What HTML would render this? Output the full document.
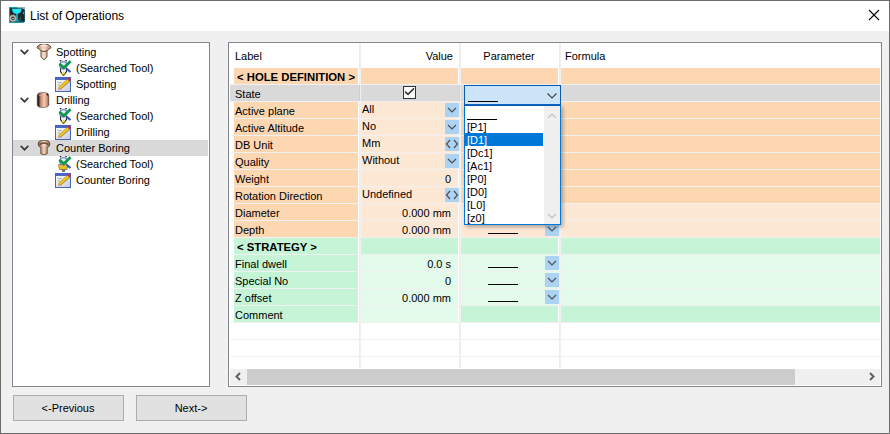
<!DOCTYPE html>
<html><head><meta charset="utf-8"><style>
html,body{margin:0;padding:0;width:890px;height:434px;overflow:hidden;background:#f0f0f0}
#r{position:relative;width:890px;height:434px;overflow:hidden;font-family:"Liberation Sans", sans-serif;font-size:12px}
#r div{position:absolute}
</style></head><body><div id="r">
<div style="left:0px;top:0px;width:890px;height:434px;background:#6b6b6b;"></div>
<div style="left:1px;top:1px;width:888px;height:432px;background:#f0f0f0;"></div>
<div style="left:1px;top:1px;width:888px;height:30px;background:#ffffff;"></div>
<svg style="position:absolute;left:9px;top:7px" width="16" height="16" viewBox="0 0 16 16">
<rect x="0" y="0" width="16" height="16" fill="#1a9ea4"/>
<rect x="1" y="1.2" width="14.6" height="13.4" fill="#20262c"/>
<path d="M8.5 0 H16 V3 Q14 1.5 12 1.2 H8.5 Z" fill="#9ab0b0"/>
<path d="M15.2 4 V8 L13.5 6 Z" fill="#40a0a0"/>
<path d="M3 1.8 H12.5 Q12.5 6.6 7.9 6.9 Q3 6.6 3 1.8 Z" fill="#1ae8f2"/>
<rect x="7.3" y="6.5" width="1.4" height="7" fill="#18d0d8"/>
<rect x="5.8" y="13.2" width="4.4" height="1" fill="#18c0c8"/>
<circle cx="3.9" cy="11.2" r="2.5" fill="#252a30" stroke="#b4b4b4" stroke-width="1.5"/>
<circle cx="3.9" cy="11.2" r="3.5" fill="none" stroke="#a0a0a0" stroke-width="0.9" stroke-dasharray="1 0.8"/>
<path d="M2.9 11.4 H5" stroke="#d8d8d8" stroke-width="0.9"/>
<path d="M11.8 9.8 Q10.4 10.6 11.2 11.8 Q12 12.8 10.6 13.4" fill="none" stroke="#1e9aa0" stroke-width="0.8"/>
<rect x="15" y="15" width="1" height="1" fill="#e0f0f0"/>
</svg>
<div style="left:30px;top:10px;font-size:12px;line-height:13px;font-weight:normal;color:#000;white-space:pre;">List of Operations</div>
<svg style="position:absolute;left:868px;top:9px" width="12" height="12" viewBox="0 0 12 12"><path d="M1 1 L11 11 M11 1 L1 11" stroke="#000" stroke-width="1.1"/></svg>
<div style="left:12px;top:42px;width:198px;height:345px;background:#828790;"></div>
<div style="left:13px;top:43px;width:196px;height:343px;background:#ffffff;"></div>
<div style="left:13px;top:140px;width:195px;height:16px;background:#d9d9d9;"></div>
<svg style="position:absolute;left:20px;top:49px" width="10" height="7" viewBox="0 0 10 7"><path d="M0.7 0.9 L4.5 4.7 L8.3 0.9" fill="none" stroke="#3c3c3c" stroke-width="1.7"/></svg>
<svg style="position:absolute;left:36px;top:44px" width="16" height="16" viewBox="0 0 16 16">
<defs><linearGradient id="cg1" x1="0" x2="1"><stop offset="0" stop-color="#a07860"/><stop offset="0.45" stop-color="#fbdccb"/><stop offset="1" stop-color="#b08a70"/></linearGradient></defs>
<path d="M4 0.6 Q8 -0.2 12 0.6 Q14.9 2 14.9 3.3 Q14.6 4.6 12.6 5.4 Q11.2 6 11 7 L11 13 L8 15.8 L5 13 L5 7 Q4.8 6 3.4 5.4 Q1.4 4.6 1.1 3.3 Q1.1 2 4 0.6 Z" fill="url(#cg1)" stroke="#4e4628" stroke-width="0.9"/>
<path d="M5 6.9 Q8 8 11 6.9" fill="none" stroke="#6a4a34" stroke-width="1"/>
<ellipse cx="8" cy="1.6" rx="3.6" ry="1" fill="#fde6d8"/>
<ellipse cx="8" cy="5.6" rx="1.6" ry="0.6" fill="#fde6d8"/>
</svg>
<div style="left:56px;top:46px;font-size:11px;line-height:13px;font-weight:normal;color:#000;white-space:pre;">Spotting</div>
<svg style="position:absolute;left:56px;top:60px" width="16" height="16" viewBox="0 0 16 16">
<path d="M4.5 0 L4.5 11.5 L7.5 15.6 L10.5 11.5 L10.5 0 Z" fill="#eceef6"/>
<path d="M4.5 7.5 L4.5 11.5 L7.5 15.6 L10.5 11.5 L10.5 7.5" fill="none" stroke="#282828" stroke-width="1.1"/>
<path d="M4.5 0 V1.2 M10 0 V1.2" stroke="#181818" stroke-width="1.4"/>
<path d="M4.5 1.2 V7.5 M10.5 1.2 V7.5" stroke="#a8b0d8" stroke-width="1"/>
<path d="M7.5 16 L6 13.6 L9 13.6 Z" fill="#905800"/><ellipse cx="7.2" cy="13.4" rx="1.6" ry="1" fill="#f4e020"/>
<circle cx="7.3" cy="5.2" r="3.6" fill="none" stroke="#7c88d4" stroke-width="1.3"/>
<path d="M10.8 8.8 L14.4 12" stroke="#3a5ac0" stroke-width="2.3"/>
<path d="M3.4 3.7 L7.7 7.8 L14.6 1.2" fill="none" stroke="#0c9a46" stroke-width="2.7"/>
</svg>
<div style="left:76px;top:62px;font-size:11px;line-height:13px;font-weight:normal;color:#000;white-space:pre;">(Searched Tool)</div>
<svg style="position:absolute;left:55px;top:76px" width="16" height="16" viewBox="0 0 16 16">
<defs><linearGradient id="pg" x1="0" y1="0" x2="1" y2="1"><stop offset="0" stop-color="#ffffff"/><stop offset="1" stop-color="#c8ccd8"/></linearGradient></defs>
<rect x="0.5" y="1.5" width="15" height="14" fill="url(#pg)" stroke="#4560c0"/>
<rect x="1" y="2" width="14" height="2" fill="#4c68c4"/>
<path d="M2.5 6.5 H7 M2.5 9 H5" stroke="#a0a4b0" stroke-width="0.8"/>
<path d="M3.2 13.6 L4.2 10.8 L12.6 3.2 L14.6 5.2 L6.2 12.8 Z" fill="#f4c818" stroke="#a87810" stroke-width="0.6"/>
<path d="M3.2 13.6 L4.2 10.8 L6.2 12.8 Z" fill="#f0a888"/>
<path d="M12.4 3.4 L14.4 5.4 L15.6 3.6 L13.8 1.6 Z" fill="#e02a1a"/>
<path d="M5 13.5 L14.8 5.5" stroke="#606878" stroke-width="0.7" opacity="0.6"/>
</svg>
<div style="left:76px;top:78px;font-size:11px;line-height:13px;font-weight:normal;color:#000;white-space:pre;">Spotting</div>
<svg style="position:absolute;left:20px;top:97px" width="10" height="7" viewBox="0 0 10 7"><path d="M0.7 0.9 L4.5 4.7 L8.3 0.9" fill="none" stroke="#3c3c3c" stroke-width="1.7"/></svg>
<svg style="position:absolute;left:36px;top:92px" width="16" height="16" viewBox="0 0 16 16">
<defs><linearGradient id="cg2" x1="0" x2="1"><stop offset="0" stop-color="#1c1410"/><stop offset="0.14" stop-color="#3a2820"/><stop offset="0.3" stop-color="#c08c70"/><stop offset="0.6" stop-color="#f6cbb2"/><stop offset="0.85" stop-color="#d09a7c"/><stop offset="1" stop-color="#684636"/></linearGradient></defs>
<path d="M1.2 3 Q1.5 0.6 7 0.4 Q12.5 0.6 12.8 3 L12.8 13 Q12.5 15.5 7 15.6 Q1.5 15.5 1.2 13 Z" fill="url(#cg2)" stroke="#4a3a28" stroke-width="0.5"/>
<path d="M2.2 2.8 Q7 5.2 11.8 2.8" fill="none" stroke="#e0b098" stroke-width="0.8"/>
<ellipse cx="11.4" cy="2.6" rx="0.9" ry="1" fill="#181008"/>
</svg>
<div style="left:56px;top:94px;font-size:11px;line-height:13px;font-weight:normal;color:#000;white-space:pre;">Drilling</div>
<svg style="position:absolute;left:56px;top:108px" width="16" height="16" viewBox="0 0 16 16">
<path d="M4.5 0 L4.5 11.5 L7.5 15.6 L10.5 11.5 L10.5 0 Z" fill="#eceef6"/>
<path d="M4.5 7.5 L4.5 11.5 L7.5 15.6 L10.5 11.5 L10.5 7.5" fill="none" stroke="#282828" stroke-width="1.1"/>
<path d="M4.5 0 V1.2 M10 0 V1.2" stroke="#181818" stroke-width="1.4"/>
<path d="M4.5 1.2 V7.5 M10.5 1.2 V7.5" stroke="#a8b0d8" stroke-width="1"/>
<path d="M7.5 16 L6 13.6 L9 13.6 Z" fill="#905800"/><ellipse cx="7.2" cy="13.4" rx="1.6" ry="1" fill="#f4e020"/>
<circle cx="7.3" cy="5.2" r="3.6" fill="none" stroke="#7c88d4" stroke-width="1.3"/>
<path d="M10.8 8.8 L14.4 12" stroke="#3a5ac0" stroke-width="2.3"/>
<path d="M3.4 3.7 L7.7 7.8 L14.6 1.2" fill="none" stroke="#0c9a46" stroke-width="2.7"/>
</svg>
<div style="left:76px;top:110px;font-size:11px;line-height:13px;font-weight:normal;color:#000;white-space:pre;">(Searched Tool)</div>
<svg style="position:absolute;left:55px;top:124px" width="16" height="16" viewBox="0 0 16 16">
<defs><linearGradient id="pg" x1="0" y1="0" x2="1" y2="1"><stop offset="0" stop-color="#ffffff"/><stop offset="1" stop-color="#c8ccd8"/></linearGradient></defs>
<rect x="0.5" y="1.5" width="15" height="14" fill="url(#pg)" stroke="#4560c0"/>
<rect x="1" y="2" width="14" height="2" fill="#4c68c4"/>
<path d="M2.5 6.5 H7 M2.5 9 H5" stroke="#a0a4b0" stroke-width="0.8"/>
<path d="M3.2 13.6 L4.2 10.8 L12.6 3.2 L14.6 5.2 L6.2 12.8 Z" fill="#f4c818" stroke="#a87810" stroke-width="0.6"/>
<path d="M3.2 13.6 L4.2 10.8 L6.2 12.8 Z" fill="#f0a888"/>
<path d="M12.4 3.4 L14.4 5.4 L15.6 3.6 L13.8 1.6 Z" fill="#e02a1a"/>
<path d="M5 13.5 L14.8 5.5" stroke="#606878" stroke-width="0.7" opacity="0.6"/>
</svg>
<div style="left:76px;top:126px;font-size:11px;line-height:13px;font-weight:normal;color:#000;white-space:pre;">Drilling</div>
<svg style="position:absolute;left:20px;top:145px" width="10" height="7" viewBox="0 0 10 7"><path d="M0.7 0.9 L4.5 4.7 L8.3 0.9" fill="none" stroke="#3c3c3c" stroke-width="1.7"/></svg>
<svg style="position:absolute;left:36px;top:140px" width="16" height="16" viewBox="0 0 16 16">
<defs><linearGradient id="cg3" x1="0" x2="1"><stop offset="0" stop-color="#80604a"/><stop offset="0.5" stop-color="#f8d2bc"/><stop offset="1" stop-color="#806048"/></linearGradient></defs>
<path d="M2.3 3.2 Q2.5 0.2 8 0.2 Q13.5 0.2 13.7 3.2 L13.7 5 Q13.5 6.8 11.2 7.4 L11.2 13.8 Q8 15.6 4.8 13.8 L4.8 7.4 Q2.5 6.8 2.3 5 Z" fill="url(#cg3)" stroke="#4e4430" stroke-width="0.8"/>
<path d="M3.6 4.6 Q8 1.4 12.4 4.6" fill="none" stroke="#6a4836" stroke-width="1.5"/>
<ellipse cx="8" cy="4.9" rx="1.8" ry="0.7" fill="#fde8da"/>
</svg>
<div style="left:56px;top:142px;font-size:11px;line-height:13px;font-weight:normal;color:#000;white-space:pre;">Counter Boring</div>
<svg style="position:absolute;left:56px;top:156px" width="16" height="16" viewBox="0 0 16 16">
<path d="M4.5 0 L4.5 11.5 L7.5 15.6 L10.5 11.5 L10.5 0 Z" fill="#eceef6"/>
<path d="M4.5 7.5 L4.5 11.5 L7.5 15.6 L10.5 11.5 L10.5 7.5" fill="none" stroke="#282828" stroke-width="1.1"/>
<path d="M4.5 0 V1.2 M10 0 V1.2" stroke="#181818" stroke-width="1.4"/>
<path d="M4.5 1.2 V7.5 M10.5 1.2 V7.5" stroke="#a8b0d8" stroke-width="1"/>
<path d="M2.6 8.5 L11.6 8.5 L11 13.5 L3.4 13.5 Z" fill="#e8c020" stroke="#806010" stroke-width="0.6"/><rect x="6" y="13.5" width="3" height="2.5" fill="#707070"/>
<circle cx="7.3" cy="5.2" r="3.6" fill="none" stroke="#7c88d4" stroke-width="1.3"/>
<path d="M10.8 8.8 L14.4 12" stroke="#3a5ac0" stroke-width="2.3"/>
<path d="M3.4 3.7 L7.7 7.8 L14.6 1.2" fill="none" stroke="#0c9a46" stroke-width="2.7"/>
</svg>
<div style="left:76px;top:158px;font-size:11px;line-height:13px;font-weight:normal;color:#000;white-space:pre;">(Searched Tool)</div>
<svg style="position:absolute;left:55px;top:172px" width="16" height="16" viewBox="0 0 16 16">
<defs><linearGradient id="pg" x1="0" y1="0" x2="1" y2="1"><stop offset="0" stop-color="#ffffff"/><stop offset="1" stop-color="#c8ccd8"/></linearGradient></defs>
<rect x="0.5" y="1.5" width="15" height="14" fill="url(#pg)" stroke="#4560c0"/>
<rect x="1" y="2" width="14" height="2" fill="#4c68c4"/>
<path d="M2.5 6.5 H7 M2.5 9 H5" stroke="#a0a4b0" stroke-width="0.8"/>
<path d="M3.2 13.6 L4.2 10.8 L12.6 3.2 L14.6 5.2 L6.2 12.8 Z" fill="#f4c818" stroke="#a87810" stroke-width="0.6"/>
<path d="M3.2 13.6 L4.2 10.8 L6.2 12.8 Z" fill="#f0a888"/>
<path d="M12.4 3.4 L14.4 5.4 L15.6 3.6 L13.8 1.6 Z" fill="#e02a1a"/>
<path d="M5 13.5 L14.8 5.5" stroke="#606878" stroke-width="0.7" opacity="0.6"/>
</svg>
<div style="left:76px;top:174px;font-size:11px;line-height:13px;font-weight:normal;color:#000;white-space:pre;">Counter Boring</div>
<div style="left:228px;top:42px;width:654px;height:345px;background:#828790;"></div>
<div style="left:229px;top:43px;width:652px;height:343px;background:#ffffff;"></div>
<div style="left:235px;top:50px;font-size:11px;line-height:13px;font-weight:normal;color:#000;white-space:pre;">Label</div>
<div style="left:153px;width:300px;text-align:right;top:50px;font-size:11px;line-height:13px;font-weight:normal;color:#000;white-space:pre;">Value</div>
<div style="left:359px;width:300px;text-align:center;top:50px;font-size:11px;line-height:13px;font-weight:normal;color:#000;white-space:pre;">Parameter</div>
<div style="left:565px;top:50px;font-size:11px;line-height:13px;font-weight:normal;color:#000;white-space:pre;">Formula</div>
<div style="left:359px;top:43px;width:1px;height:325px;background:#e6eef8;"></div>
<div style="left:360px;top:43px;width:1px;height:325px;background:#f0f0f0;"></div>
<div style="left:459px;top:43px;width:1px;height:325px;background:#e6eef8;"></div>
<div style="left:460px;top:43px;width:1px;height:325px;background:#f0f0f0;"></div>
<div style="left:559px;top:43px;width:1px;height:325px;background:#e6eef8;"></div>
<div style="left:560px;top:43px;width:1px;height:325px;background:#f0f0f0;"></div>
<div style="left:230px;top:84px;width:651px;height:1px;background:#f0f0f0;"></div>
<div style="left:234px;top:68px;width:124px;height:16px;background:#fdd6b2;"></div>
<div style="left:361px;top:68px;width:97px;height:16px;background:#fdd6b2;"></div>
<div style="left:461px;top:68px;width:97px;height:16px;background:#fdd6b2;"></div>
<div style="left:561px;top:68px;width:319px;height:16px;background:#fdd6b2;"></div>
<div style="left:237px;top:71px;font-size:11.3px;line-height:13px;font-weight:bold;color:#000;white-space:pre;">&lt; HOLE DEFINITION &gt;</div>
<div style="left:230px;top:101px;width:651px;height:1px;background:#f0f0f0;"></div>
<div style="left:230px;top:85px;width:129px;height:16px;background:#d9d9d9;"></div>
<div style="left:359px;top:85px;width:1px;height:16px;background:#c9d0d9;"></div>
<div style="left:361px;top:85px;width:98px;height:16px;background:#d9d9d9;"></div>
<div style="left:459px;top:85px;width:1px;height:16px;background:#c9d0d9;"></div>
<div style="left:461px;top:85px;width:98px;height:16px;background:#d9d9d9;"></div>
<div style="left:559px;top:85px;width:1px;height:16px;background:#c9d0d9;"></div>
<div style="left:561px;top:85px;width:319px;height:16px;background:#d9d9d9;"></div>
<div style="left:235px;top:88px;font-size:11px;line-height:13px;font-weight:normal;color:#000;white-space:pre;">State</div>
<div style="left:403px;top:86px;width:13px;height:13px;background:#333333;"></div>
<div style="left:404px;top:87px;width:11px;height:11px;background:#ffffff;"></div>
<svg style="position:absolute;left:403px;top:86px" width="13" height="13" viewBox="0 0 13 13"><path d="M2 5.6 L5 8.4 L11 2.4" fill="none" stroke="#333" stroke-width="1.5"/></svg>
<div style="left:230px;top:118px;width:651px;height:1px;background:#f0f0f0;"></div>
<div style="left:234px;top:102px;width:124px;height:16px;background:#fdd6b2;"></div>
<div style="left:361px;top:102px;width:97px;height:16px;background:#fde7d5;"></div>
<div style="left:461px;top:102px;width:97px;height:16px;background:#fdd6b2;"></div>
<div style="left:561px;top:102px;width:319px;height:16px;background:#fdd6b2;"></div>
<div style="left:235px;top:105px;font-size:11px;line-height:13px;font-weight:normal;color:#000;white-space:pre;">Active plane</div>
<div style="left:362px;top:103px;font-size:11px;line-height:13px;font-weight:normal;color:#000;white-space:pre;">All</div>
<div style="left:445px;top:103px;width:14px;height:14px;background:#acd2f4;"></div>
<svg style="position:absolute;left:445px;top:103px" width="14" height="14" viewBox="0 0 14 14"><path d="M3 5 L7 9 L11 5" fill="none" stroke="#505050" stroke-width="1.2"/></svg>
<div style="left:230px;top:135px;width:651px;height:1px;background:#f0f0f0;"></div>
<div style="left:234px;top:119px;width:124px;height:16px;background:#fdd6b2;"></div>
<div style="left:361px;top:119px;width:97px;height:16px;background:#fde7d5;"></div>
<div style="left:461px;top:119px;width:97px;height:16px;background:#fdd6b2;"></div>
<div style="left:561px;top:119px;width:319px;height:16px;background:#fdd6b2;"></div>
<div style="left:235px;top:122px;font-size:11px;line-height:13px;font-weight:normal;color:#000;white-space:pre;">Active Altitude</div>
<div style="left:362px;top:120px;font-size:11px;line-height:13px;font-weight:normal;color:#000;white-space:pre;">No</div>
<div style="left:445px;top:120px;width:14px;height:14px;background:#acd2f4;"></div>
<svg style="position:absolute;left:445px;top:120px" width="14" height="14" viewBox="0 0 14 14"><path d="M3 5 L7 9 L11 5" fill="none" stroke="#505050" stroke-width="1.2"/></svg>
<div style="left:230px;top:152px;width:651px;height:1px;background:#f0f0f0;"></div>
<div style="left:234px;top:136px;width:124px;height:16px;background:#fdd6b2;"></div>
<div style="left:361px;top:136px;width:97px;height:16px;background:#fde7d5;"></div>
<div style="left:461px;top:136px;width:97px;height:16px;background:#fdd6b2;"></div>
<div style="left:561px;top:136px;width:319px;height:16px;background:#fdd6b2;"></div>
<div style="left:235px;top:139px;font-size:11px;line-height:13px;font-weight:normal;color:#000;white-space:pre;">DB Unit</div>
<div style="left:362px;top:137px;font-size:11px;line-height:13px;font-weight:normal;color:#000;white-space:pre;">Mm</div>
<div style="left:445px;top:137px;width:14px;height:14px;background:#acd2f4;"></div>
<svg style="position:absolute;left:445px;top:137px" width="14" height="14" viewBox="0 0 14 14"><path d="M5 3 L1.5 7 L5 11 M9 3 L12.5 7 L9 11" fill="none" stroke="#505050" stroke-width="1.2"/></svg>
<div style="left:230px;top:169px;width:651px;height:1px;background:#f0f0f0;"></div>
<div style="left:234px;top:153px;width:124px;height:16px;background:#fdd6b2;"></div>
<div style="left:361px;top:153px;width:97px;height:16px;background:#fde7d5;"></div>
<div style="left:461px;top:153px;width:97px;height:16px;background:#fdd6b2;"></div>
<div style="left:561px;top:153px;width:319px;height:16px;background:#fdd6b2;"></div>
<div style="left:235px;top:156px;font-size:11px;line-height:13px;font-weight:normal;color:#000;white-space:pre;">Quality</div>
<div style="left:362px;top:154px;font-size:11px;line-height:13px;font-weight:normal;color:#000;white-space:pre;">Without</div>
<div style="left:445px;top:154px;width:14px;height:14px;background:#acd2f4;"></div>
<svg style="position:absolute;left:445px;top:154px" width="14" height="14" viewBox="0 0 14 14"><path d="M3 5 L7 9 L11 5" fill="none" stroke="#505050" stroke-width="1.2"/></svg>
<div style="left:230px;top:186px;width:651px;height:1px;background:#f0f0f0;"></div>
<div style="left:234px;top:170px;width:124px;height:16px;background:#fdd6b2;"></div>
<div style="left:361px;top:170px;width:97px;height:16px;background:#fde7d5;"></div>
<div style="left:461px;top:170px;width:97px;height:16px;background:#fdd6b2;"></div>
<div style="left:561px;top:170px;width:319px;height:16px;background:#fdd6b2;"></div>
<div style="left:235px;top:173px;font-size:11px;line-height:13px;font-weight:normal;color:#000;white-space:pre;">Weight</div>
<div style="left:151px;width:300px;text-align:right;top:173px;font-size:11px;line-height:13px;font-weight:normal;color:#000;white-space:pre;">0</div>
<div style="left:230px;top:203px;width:651px;height:1px;background:#f0f0f0;"></div>
<div style="left:234px;top:187px;width:124px;height:16px;background:#fdd6b2;"></div>
<div style="left:361px;top:187px;width:97px;height:16px;background:#fde7d5;"></div>
<div style="left:461px;top:187px;width:97px;height:16px;background:#fdd6b2;"></div>
<div style="left:561px;top:187px;width:319px;height:16px;background:#fdd6b2;"></div>
<div style="left:235px;top:190px;font-size:11px;line-height:13px;font-weight:normal;color:#000;white-space:pre;">Rotation Direction</div>
<div style="left:362px;top:188px;font-size:11px;line-height:13px;font-weight:normal;color:#000;white-space:pre;">Undefined</div>
<div style="left:445px;top:188px;width:14px;height:14px;background:#acd2f4;"></div>
<svg style="position:absolute;left:445px;top:188px" width="14" height="14" viewBox="0 0 14 14"><path d="M5 3 L1.5 7 L5 11 M9 3 L12.5 7 L9 11" fill="none" stroke="#505050" stroke-width="1.2"/></svg>
<div style="left:230px;top:220px;width:651px;height:1px;background:#f0f0f0;"></div>
<div style="left:234px;top:204px;width:124px;height:16px;background:#fdd6b2;"></div>
<div style="left:361px;top:204px;width:97px;height:16px;background:#fde7d5;"></div>
<div style="left:461px;top:204px;width:97px;height:16px;background:#fde7d5;"></div>
<div style="left:561px;top:204px;width:319px;height:16px;background:#fde7d5;"></div>
<div style="left:235px;top:207px;font-size:11px;line-height:13px;font-weight:normal;color:#000;white-space:pre;">Diameter</div>
<div style="left:151px;width:300px;text-align:right;top:207px;font-size:11px;line-height:13px;font-weight:normal;color:#000;white-space:pre;">0.000 mm</div>
<div style="left:488px;top:216px;width:30px;height:1px;background:#000;"></div>
<div style="left:545px;top:205px;width:14px;height:14px;background:#acd2f4;"></div>
<svg style="position:absolute;left:545px;top:205px" width="14" height="14" viewBox="0 0 14 14"><path d="M3 5 L7 9 L11 5" fill="none" stroke="#505050" stroke-width="1.2"/></svg>
<div style="left:230px;top:237px;width:651px;height:1px;background:#f0f0f0;"></div>
<div style="left:234px;top:221px;width:124px;height:16px;background:#fdd6b2;"></div>
<div style="left:361px;top:221px;width:97px;height:16px;background:#fde7d5;"></div>
<div style="left:461px;top:221px;width:97px;height:16px;background:#fde7d5;"></div>
<div style="left:561px;top:221px;width:319px;height:16px;background:#fde7d5;"></div>
<div style="left:235px;top:224px;font-size:11px;line-height:13px;font-weight:normal;color:#000;white-space:pre;">Depth</div>
<div style="left:151px;width:300px;text-align:right;top:224px;font-size:11px;line-height:13px;font-weight:normal;color:#000;white-space:pre;">0.000 mm</div>
<div style="left:488px;top:233px;width:30px;height:1px;background:#000;"></div>
<div style="left:545px;top:222px;width:14px;height:14px;background:#acd2f4;"></div>
<svg style="position:absolute;left:545px;top:222px" width="14" height="14" viewBox="0 0 14 14"><path d="M3 5 L7 9 L11 5" fill="none" stroke="#505050" stroke-width="1.2"/></svg>
<div style="left:230px;top:254px;width:651px;height:1px;background:#f0f0f0;"></div>
<div style="left:234px;top:238px;width:124px;height:16px;background:#c5f5d6;"></div>
<div style="left:361px;top:238px;width:97px;height:16px;background:#c5f5d6;"></div>
<div style="left:461px;top:238px;width:97px;height:16px;background:#c5f5d6;"></div>
<div style="left:561px;top:238px;width:319px;height:16px;background:#c5f5d6;"></div>
<div style="left:237px;top:241px;font-size:11.3px;line-height:13px;font-weight:bold;color:#000;white-space:pre;">&lt; STRATEGY &gt;</div>
<div style="left:230px;top:271px;width:651px;height:1px;background:#f0f0f0;"></div>
<div style="left:234px;top:255px;width:124px;height:16px;background:#c5f5d6;"></div>
<div style="left:361px;top:255px;width:97px;height:16px;background:#e2fbea;"></div>
<div style="left:461px;top:255px;width:97px;height:16px;background:#e2fbea;"></div>
<div style="left:561px;top:255px;width:319px;height:16px;background:#e2fbea;"></div>
<div style="left:235px;top:258px;font-size:11px;line-height:13px;font-weight:normal;color:#000;white-space:pre;">Final dwell</div>
<div style="left:151px;width:300px;text-align:right;top:258px;font-size:11px;line-height:13px;font-weight:normal;color:#000;white-space:pre;">0.0 s</div>
<div style="left:488px;top:267px;width:30px;height:1px;background:#000;"></div>
<div style="left:545px;top:256px;width:14px;height:14px;background:#acd2f4;"></div>
<svg style="position:absolute;left:545px;top:256px" width="14" height="14" viewBox="0 0 14 14"><path d="M3 5 L7 9 L11 5" fill="none" stroke="#505050" stroke-width="1.2"/></svg>
<div style="left:230px;top:288px;width:651px;height:1px;background:#f0f0f0;"></div>
<div style="left:234px;top:272px;width:124px;height:16px;background:#c5f5d6;"></div>
<div style="left:361px;top:272px;width:97px;height:16px;background:#e2fbea;"></div>
<div style="left:461px;top:272px;width:97px;height:16px;background:#e2fbea;"></div>
<div style="left:561px;top:272px;width:319px;height:16px;background:#e2fbea;"></div>
<div style="left:235px;top:275px;font-size:11px;line-height:13px;font-weight:normal;color:#000;white-space:pre;">Special No</div>
<div style="left:151px;width:300px;text-align:right;top:275px;font-size:11px;line-height:13px;font-weight:normal;color:#000;white-space:pre;">0</div>
<div style="left:488px;top:284px;width:30px;height:1px;background:#000;"></div>
<div style="left:545px;top:273px;width:14px;height:14px;background:#acd2f4;"></div>
<svg style="position:absolute;left:545px;top:273px" width="14" height="14" viewBox="0 0 14 14"><path d="M3 5 L7 9 L11 5" fill="none" stroke="#505050" stroke-width="1.2"/></svg>
<div style="left:230px;top:305px;width:651px;height:1px;background:#f0f0f0;"></div>
<div style="left:234px;top:289px;width:124px;height:16px;background:#c5f5d6;"></div>
<div style="left:361px;top:289px;width:97px;height:16px;background:#e2fbea;"></div>
<div style="left:461px;top:289px;width:97px;height:16px;background:#e2fbea;"></div>
<div style="left:561px;top:289px;width:319px;height:16px;background:#e2fbea;"></div>
<div style="left:235px;top:292px;font-size:11px;line-height:13px;font-weight:normal;color:#000;white-space:pre;">Z offset</div>
<div style="left:151px;width:300px;text-align:right;top:292px;font-size:11px;line-height:13px;font-weight:normal;color:#000;white-space:pre;">0.000 mm</div>
<div style="left:488px;top:301px;width:30px;height:1px;background:#000;"></div>
<div style="left:545px;top:290px;width:14px;height:14px;background:#acd2f4;"></div>
<svg style="position:absolute;left:545px;top:290px" width="14" height="14" viewBox="0 0 14 14"><path d="M3 5 L7 9 L11 5" fill="none" stroke="#505050" stroke-width="1.2"/></svg>
<div style="left:230px;top:322px;width:651px;height:1px;background:#f0f0f0;"></div>
<div style="left:234px;top:306px;width:124px;height:16px;background:#c5f5d6;"></div>
<div style="left:361px;top:306px;width:97px;height:16px;background:#e2fbea;"></div>
<div style="left:461px;top:306px;width:97px;height:16px;background:#c5f5d6;"></div>
<div style="left:561px;top:306px;width:319px;height:16px;background:#c5f5d6;"></div>
<div style="left:235px;top:309px;font-size:11px;line-height:13px;font-weight:normal;color:#000;white-space:pre;">Comment</div>
<div style="left:230px;top:339px;width:651px;height:1px;background:#f0f0f0;"></div>
<div style="left:230px;top:356px;width:651px;height:1px;background:#f0f0f0;"></div>
<div style="left:230px;top:373px;width:651px;height:1px;background:#f0f0f0;"></div>
<div style="left:230px;top:369px;width:650px;height:16px;background:#f0f0f0;"></div>
<div style="left:247px;top:369px;width:548px;height:16px;background:#cdcdcd;"></div>
<svg style="position:absolute;left:230px;top:369px" width="17" height="16" viewBox="0 0 17 16"><path d="M10 4 L6.5 7.5 L10 11" fill="none" stroke="#606060" stroke-width="2"/></svg>
<svg style="position:absolute;left:863px;top:369px" width="17" height="16" viewBox="0 0 17 16"><path d="M7 4 L10.5 7.5 L7 11" fill="none" stroke="#606060" stroke-width="2"/></svg>
<div style="left:464px;top:105px;width:97px;height:120px;box-shadow:2px 2px 4px rgba(0,0,0,0.3);background:#0078d7"></div>
<div style="left:464px;top:105px;width:97px;height:120px;background:#0078d7;"></div>
<div style="left:465px;top:106px;width:95px;height:118px;background:#ffffff;"></div>
<div style="left:544px;top:106px;width:16px;height:118px;background:#f0f0f0;"></div>
<svg style="position:absolute;left:544px;top:110px" width="16" height="12" viewBox="0 0 16 12"><path d="M4 8 L8 4 L12 8" fill="none" stroke="#c0c0c0" stroke-width="1.2"/></svg>
<svg style="position:absolute;left:544px;top:210px" width="16" height="12" viewBox="0 0 16 12"><path d="M4 4 L8 8 L12 4" fill="none" stroke="#c0c0c0" stroke-width="1.2"/></svg>
<div style="left:464px;top:85px;width:97px;height:21px;background:#0a5cb0;"></div>
<div style="left:465px;top:86px;width:95px;height:18px;background:#cce4f7;"></div>
<div style="left:465px;top:104px;width:95px;height:1px;background:#0a64c0;"></div>
<div style="left:468px;top:101px;width:30px;height:1px;background:#000;"></div>
<svg style="position:absolute;left:546px;top:92px" width="12" height="8" viewBox="0 0 12 8"><path d="M1.5 1.5 L6 6 L10.5 1.5" fill="none" stroke="#404040" stroke-width="1.1"/></svg>
<div style="left:467px;top:119px;width:30px;height:1px;background:#000;"></div>
<div style="left:465px;top:133px;width:78px;height:13px;background:#0078d7;"></div>
<div style="left:467px;top:121px;font-size:11px;line-height:13px;font-weight:normal;color:#000;white-space:pre;">[P1]</div>
<div style="left:467px;top:134px;font-size:11px;line-height:13px;font-weight:normal;color:#fff;white-space:pre;">[D1]</div>
<div style="left:467px;top:147px;font-size:11px;line-height:13px;font-weight:normal;color:#000;white-space:pre;">[Dc1]</div>
<div style="left:467px;top:160px;font-size:11px;line-height:13px;font-weight:normal;color:#000;white-space:pre;">[Ac1]</div>
<div style="left:467px;top:173px;font-size:11px;line-height:13px;font-weight:normal;color:#000;white-space:pre;">[P0]</div>
<div style="left:467px;top:186px;font-size:11px;line-height:13px;font-weight:normal;color:#000;white-space:pre;">[D0]</div>
<div style="left:467px;top:199px;font-size:11px;line-height:13px;font-weight:normal;color:#000;white-space:pre;">[L0]</div>
<div style="left:467px;top:212px;font-size:11px;line-height:13px;font-weight:normal;color:#000;white-space:pre;">[z0]</div>
<div style="left:13px;top:395px;width:111px;height:26px;background:#adadad;"></div>
<div style="left:14px;top:396px;width:109px;height:24px;background:#e1e1e1;"></div>
<div style="left:-82px;width:300px;text-align:center;top:402px;font-size:11px;line-height:13px;font-weight:normal;color:#000;white-space:pre;">&lt;-Previous</div>
<div style="left:136px;top:395px;width:111px;height:26px;background:#adadad;"></div>
<div style="left:137px;top:396px;width:109px;height:24px;background:#e1e1e1;"></div>
<div style="left:41px;width:300px;text-align:center;top:402px;font-size:11px;line-height:13px;font-weight:normal;color:#000;white-space:pre;">Next-&gt;</div>
</div></body></html>
